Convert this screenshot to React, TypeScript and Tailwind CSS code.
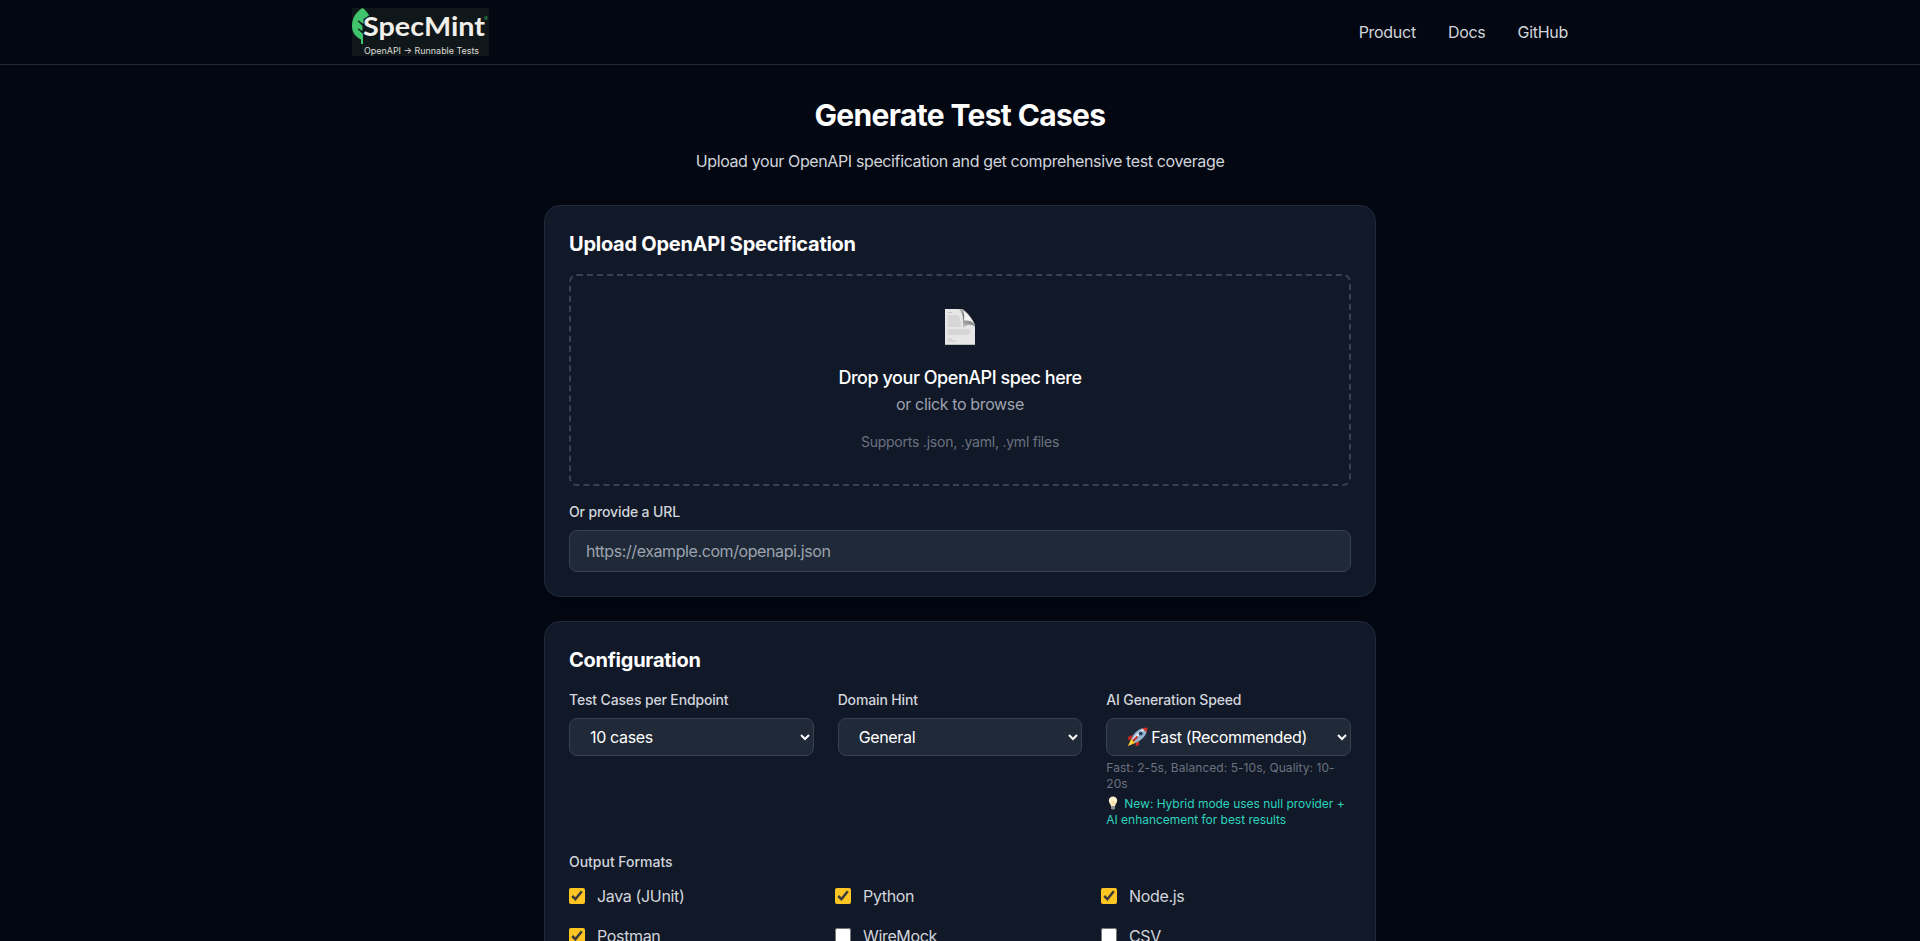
import type { ReactNode } from "react";

const NAV_LINKS = ["Product", "Docs", "GitHub"];

const FORMATS = [
  { name: "Java (JUnit)", on: true },
  { name: "Python", on: true },
  { name: "Node.js", on: true },
  { name: "Postman", on: true },
  { name: "WireMock", on: false },
  { name: "CSV", on: false },
];

function Logo() {
  return (
    <svg width="137" height="48" viewBox="0 0 137 48" role="img" aria-label="SpecMint">
      <rect width="137" height="48" fill="#10171a" />
      <path d="M10.500 0C4 4 0 10 0 18C0 25 4 29 9 31.500V36H11V26L5.500 21L6.500 20.500L10.500 23V18L5.500 13L6.500 12.500L11.500 16V11L17 7.500C15.500 4.500 13.500 2 10.500 0Z" fill="#3fc46b" />
      <text x="11" y="28" textLength="122" lengthAdjust="spacingAndGlyphs" fontFamily="Lato, sans-serif" fontWeight="700" fontSize="27" fill="#f1efe9">SpecMint</text>
      <text x="132" y="13" fontFamily="Inter, sans-serif" fontSize="6" fill="#2c8a4e">®</text>
      <text x="12" y="46" textLength="115" lengthAdjust="spacingAndGlyphs" fontFamily="Inter, sans-serif" fontSize="9" fill="#dcdcd8">OpenAPI → Runnable Tests</text>
    </svg>
  );
}

function PageIcon() {
  return (
    <svg width="32" height="38" viewBox="0 0 32 38" aria-hidden="true">
      <defs>
        <linearGradient id="curl" x1="0.700" y1="0" x2="0.300" y2="1">
          <stop offset="0" stopColor="#e8e8e8" />
          <stop offset="0.450" stopColor="#777777" />
          <stop offset="1" stopColor="#c9c9c9" />
        </linearGradient>
      </defs>
      <path d="M1 1H18C23 4 28 10 31 17V36.500H1Z" fill="#e6e6e6" />
      <path d="M15 1H18C23 4 28 10 31 17V19C27 16 23 16 19 20V12C19 7 18 4 15 1Z" fill="url(#curl)" />
      <path d="M19 2.500C20.500 5 20.500 9 20 12.500C24 12 28 13 30.500 16C27 10 24 6 19 2.500Z" fill="#f4f4f4" />
      <path d="M3.500 4.500H8M3.500 8H15M3.500 10H16M3.500 12H16M3.500 14H17M3.500 16H17M3.500 18H17M3.500 22H26M3.500 24H27M3.500 26H25M3.500 31H8M3.500 33H12" stroke="#c6c6c6" strokeWidth="1" />
      <path d="M1 36.500H31" stroke="#bdbdbd" />
    </svg>
  );
}

function Rocket() {
  return (
    <svg width="21" height="20" viewBox="0 0 21 20" aria-hidden="true">
      <path d="M6 8L1.500 9.500L0.500 13L5 12Z" fill="#c8281c" />
      <path d="M12 13.500L12 18L8.500 19.500L9 15Z" fill="#c8281c" />
      <path d="M4 12L1 19L8.500 16L7.500 13Z" fill="#f7b923" />
      <path d="M5 13L1.200 18.800L6 15.500Z" fill="#ffe34d" />
      <path d="M4.500 12C6 7 11 2 16.500 1L20 3.500C19 9 14 14 8.500 16Z" fill="#93b4cf" />
      <path d="M5.500 12.300C8 8 12 4 16 2L17.500 3C14 6 10 10 7 14Z" fill="#d9e8f2" />
      <path d="M15 1.300L20.500 0.500L19.800 5.500Z" fill="#d5301f" />
      <circle cx="13.700" cy="6.500" r="2" fill="#27435e" />
      <path d="M10.500 9.500L6 14" stroke="#c8281c" strokeWidth="1.800" />
    </svg>
  );
}

function Bulb() {
  return (
    <svg width="14" height="14" viewBox="0 0 14 14" aria-hidden="true">
      <path d="M7 0.500C4.500 0.500 2.800 2.200 2.800 4.500C2.800 6.600 4.600 7.800 4.900 10H9.100C9.400 7.800 11.200 6.600 11.200 4.500C11.200 2.200 9.500 0.500 7 0.500Z" fill="#fdf2cf" />
      <path d="M6.200 9.500L5.800 5.500L7 6.500L8.200 5.500L7.800 9.500" stroke="#f0c868" strokeWidth="0.600" fill="none" />
      <path d="M5 10H9V12.500L8 13.500H6L5 12.500Z" fill="#8e8e8e" />
    </svg>
  );
}

function Card({ title, children }: { title: string; children: ReactNode }) {
  return (
    <section className="rounded-2xl border border-[#1f2937] bg-[#111827] p-6 shadow-lg">
      <h2 className="mb-4 text-xl font-bold tracking-[-0.26px] text-white">{title}</h2>
      {children}
    </section>
  );
}

function Field({ label, value, icon, children }: { label: string; value: string; icon?: ReactNode; children?: ReactNode }) {
  return (
    <div>
      <div className="mb-2 text-sm font-[550] tracking-[-0.15px] text-[#d1d5db]">{label}</div>
      <button className="flex h-[38px] w-full items-center rounded-lg border border-[#374151] bg-[#1f2937] pr-[3px] pl-5 text-left tracking-[-0.34px] text-white">
        {icon && <span className="mr-[3px]">{icon}</span>}
        <span className="flex-1">{value}</span>
        <svg width="10" height="8" viewBox="0 0 10 8" fill="none" stroke="white" strokeWidth="2" aria-hidden="true">
          <path d="M1 2L5 6L9 2" />
        </svg>
      </button>
      {children}
    </div>
  );
}

export default function App() {
  return (
    <div className="h-[941px] overflow-hidden bg-[#030712] font-['Inter',sans-serif] text-base">
      <header className="border-b border-[#1f2937]">
        <div className="mx-auto flex h-16 max-w-7xl items-center justify-between px-8">
          <Logo />
          <nav className="flex gap-8 tracking-[-0.28px] text-[#d1d5db]">
            {NAV_LINKS.map((link) => (
              <a key={link} href="#">{link}</a>
            ))}
          </nav>
        </div>
      </header>
      <main className="mx-auto max-w-4xl px-8 py-8">
        <div className="mb-8 text-center">
          <h1 className="mb-4 text-3xl font-bold tracking-[-0.65px] text-white">Generate Test Cases</h1>
          <p className="tracking-[-0.375px] text-[#d1d5db]">Upload your OpenAPI specification and get comprehensive test coverage</p>
        </div>
        <div className="flex flex-col gap-6">
          <Card title="Upload OpenAPI Specification">
            <div className="rounded-lg border-2 border-dashed border-[#374151] p-8 text-center">
              <div className="mb-4 flex h-10 items-start justify-center">
                <PageIcon />
              </div>
              <p className="text-lg font-medium tracking-[-0.45px] text-white">Drop your OpenAPI spec here</p>
              <p className="tracking-[-0.36px] text-[#9ca3af]">or click to browse</p>
              <p className="mt-4 text-sm tracking-[-0.23px] text-[#6b7280]">Supports .json, .yaml, .yml files</p>
            </div>
            <label className="mt-4 block text-sm text-[#d1d5db]">
              <span className="mb-2 block font-[550] tracking-[-0.13px]">Or provide a URL</span>
              <input
                type="url"
                placeholder="https://example.com/openapi.json"
                className="block h-[42px] w-full rounded-lg border border-[#374151] bg-[#1f2937] px-4 text-base font-normal tracking-[-0.41px] placeholder:text-[#9ca3af]"
              />
            </label>
          </Card>
          <Card title="Configuration">
            <div className="mb-6 grid grid-cols-3 gap-6">
              <Field label="Test Cases per Endpoint" value="10 cases" />
              <Field label="Domain Hint" value="General" />
              <Field label="AI Generation Speed" value="Fast (Recommended)" icon={<Rocket />}>
                <p className="mt-1 text-xs tracking-[0.05px] text-[#6b7280]">Fast: 2-5s, Balanced: 5-10s, Quality: 10-20s</p>
                <p className="mt-1 text-xs tracking-[-0.03px] text-[#2dd4bf]">
                  <span className="mr-1 inline-block h-3 align-top"><Bulb /></span>
                  New: Hybrid mode uses null provider + AI enhancement for best results
                </p>
              </Field>
            </div>
            <div className="mb-3 text-sm font-[550] tracking-[-0.02px] text-[#d1d5db]">Output Formats</div>
            <div className="grid grid-cols-3 gap-4">
              {FORMATS.map((format) => (
                <label key={format.name} className="flex items-center gap-3 tracking-[-0.34px] text-[#d1d5db]">
                  <input type="checkbox" defaultChecked={format.on} className="size-4 accent-[#ffc522]" />
                  <span>{format.name}</span>
                </label>
              ))}
            </div>
          </Card>
        </div>
      </main>
    </div>
  );
}
